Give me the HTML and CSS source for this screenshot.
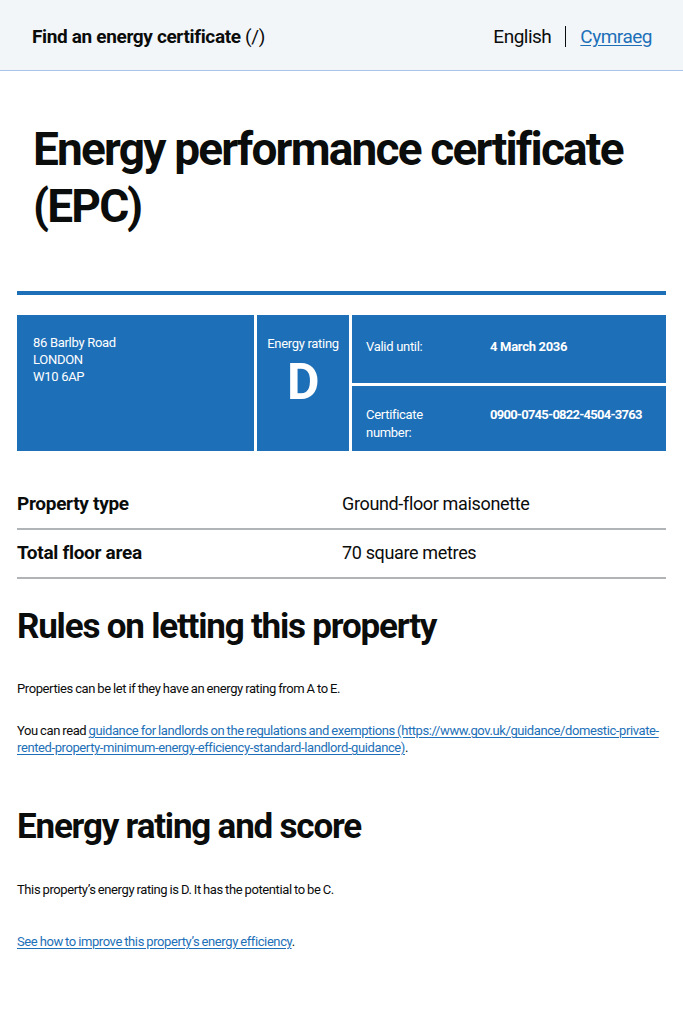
FILE: index.html
```html
<!DOCTYPE html>
<html lang="en">
<head>
  <meta charset="UTF-8">
  <meta name="viewport" content="width=device-width, initial-scale=1.0" />
  <title>Energy performance certificate (EPC)</title>
  <link rel="stylesheet" href="styles.css">
</head>
<body>

  <header class="site-header">
    <span class="service-name">Find an energy certificate <span class="slash">(/)</span></span>
    <nav class="lang">
      <span class="lang-current">English</span>
      <span class="lang-sep"></span>
      <a href="#" class="link">Cymraeg</a>
    </nav>
  </header>

  <main class="page">
    <h1 class="page-title">Energy performance certificate (EPC)</h1>

    <div class="rule"></div>

    <div class="epc-box">
      <div class="cell address">
        86 Barlby Road<br>
        LONDON<br>
        W10 6AP
      </div>
      <div class="cell rating">
        <span>Energy rating</span>
        <span class="rating-letter">D</span>
      </div>
      <div class="cell meta">
        <span>Valid until:</span>
        <strong>4 March 2036</strong>
      </div>
      <div class="cell meta meta-cert">
        <span>Certificate<br>number:</span>
        <strong class="cert-number">0900-0745-0822-4504-3763</strong>
      </div>
    </div>

    <dl class="summary">
      <div class="summary-row">
        <dt>Property type</dt>
        <dd>Ground-floor maisonette</dd>
      </div>
      <div class="summary-row">
        <dt>Total floor area</dt>
        <dd>70 square metres</dd>
      </div>
    </dl>

    <h2 class="heading">Rules on letting this property</h2>
    <p class="body">Properties can be let if they have an energy rating from A to E.</p>
    <p class="body">You can read <a href="#" class="link">guidance for landlords on the regulations and exemptions (https://www.gov.uk/guidance/domestic-private-rented-property-minimum-energy-efficiency-standard-landlord-guidance)</a>.</p>

    <h2 class="heading heading-second">Energy rating and score</h2>
    <p class="body">This property’s energy rating is D. It has the potential to be C.</p>
    <p class="body body-link"><a href="#" class="link">See how to improve this property’s energy efficiency</a>.</p>
  </main>

</body>
</html>
```

FILE: styles.css
```css
body {
  margin: 0;
  font-family: Roboto, 'Liberation Sans', Arial, sans-serif;
  color: #0b0c0c;
  background: #fff;
}
.link {
  color: #1d70b8;
  text-decoration: underline;
  text-underline-offset: 2px;
}

/* header */
.site-header {
  display: flex;
  align-items: center;
  justify-content: space-between;
  height: 71px;
  padding: 3px 31px 0 32px;
  box-sizing: border-box;
  background: #f3f6f9;
  border-bottom: 1px solid #a9c6e6;
}
.service-name {
  font-size: 19px;
  font-weight: 700;
  letter-spacing: -0.35px;
}
.slash {
  font-weight: 400;
}
.lang {
  display: flex;
  align-items: center;
  font-size: 19px;
  letter-spacing: -0.5px;
}
.lang-sep {
  width: 1px;
  height: 21px;
  background: #0b0c0c;
  margin: 0 14px;
}

/* page */
.page {
  padding: 0 17px 40px;
}
.page-title {
  font-size: 46px;
  line-height: 57px;
  letter-spacing: -1.8px;
  margin: 50px 0 0;
  padding: 0 16px;
  font-weight: 700;
}
.rule {
  height: 4px;
  background: #1d70b8;
  margin-top: 56px;
}

/* blue certificate panel */
.epc-box {
  display: grid;
  grid-template-columns: 237px 92px 1fr;
  grid-template-rows: 68px 65px;
  gap: 3px;
  margin-top: 20px;
  color: #fff;
  font-size: 13px;
  letter-spacing: -0.3px;
}
.cell {
  background: #1d6fb8;
}
.address {
  grid-row: 1 / 3;
  padding: 19px 16px;
  line-height: 17px;
}
.rating {
  grid-row: 1 / 3;
  display: flex;
  flex-direction: column;
  align-items: center;
  padding-top: 21px;
}
.rating-letter {
  font-size: 50px;
  font-weight: 700;
  line-height: 50px;
  margin-top: 6px;
}
.meta {
  display: grid;
  grid-template-columns: 124px 1fr;
  padding: 23px 14px 0;
  line-height: 18px;
}
.meta-cert {
  padding-top: 20px;
}
.cert-number {
  white-space: nowrap;
  letter-spacing: -0.75px;
}

/* summary list */
.summary {
  margin: 30px 0 0;
}
.summary-row {
  display: grid;
  grid-template-columns: 325px 1fr;
  border-bottom: 2px solid #b1b4b6;
  padding: 9px 0 11px;
  font-size: 19px;
  line-height: 27px;
}
.summary-row dt {
  font-weight: 700;
  letter-spacing: -0.3px;
}
.summary-row dd {
  margin: 0;
  font-size: 18px;
  letter-spacing: -0.35px;
}

/* content */
.heading {
  font-size: 35px;
  line-height: 42px;
  letter-spacing: -1.2px;
  margin: 27px 0 32px;
}
.heading-second {
  margin: 50px 0 33px;
}
.body {
  font-size: 13px;
  line-height: 17px;
  letter-spacing: -0.4px;
  word-spacing: -0.5px;
  margin: 0 0 25px;
}
.body-link {
  margin-top: 35px;
}
```
